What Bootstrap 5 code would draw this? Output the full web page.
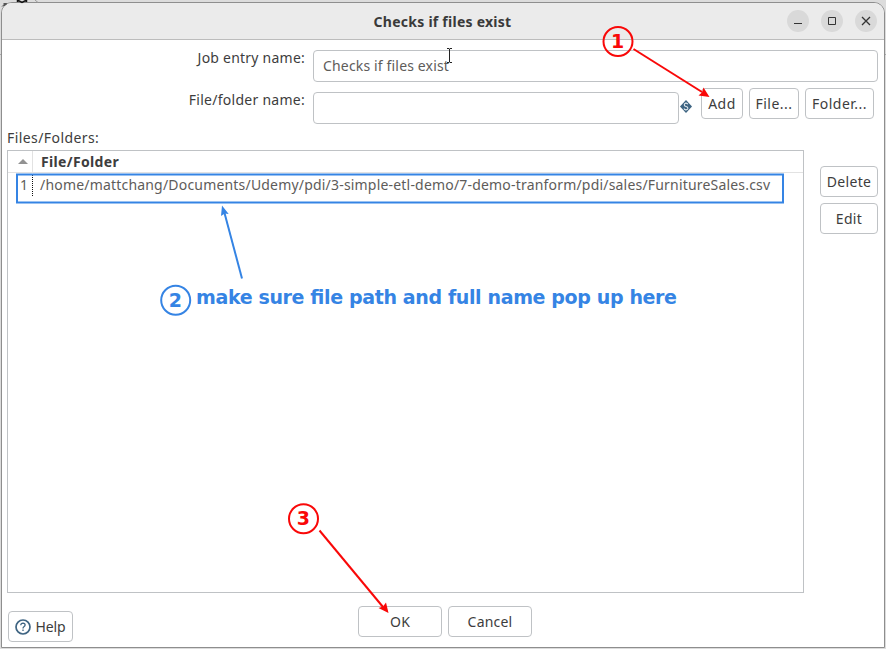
<!DOCTYPE html>
<html lang="en">
<head>
<meta charset="utf-8">
<meta name="viewport" content="width=device-width, initial-scale=1">
<title>Checks if files exist</title>
<link href="https://cdn.jsdelivr.net/npm/bootstrap@5.3.0/dist/css/bootstrap.min.css" rel="stylesheet">
<style>
body{width:886px;height:649px;background:#dcdcdc;font-family:"Noto Sans","Open Sans",sans-serif;font-size:14px;line-height:20px;color:#3d3d3d;padding:2px 1px 1px 1px}
.dialog{height:646px;background:#fff;border:1px solid #8e8e8e;border-radius:11px 11px 0 0}
.titlebar{height:37px;background:#ebebeb;border-bottom:1px solid #bcbcbc;border-radius:10px 10px 0 0;padding:0 7px 0 0}
.title-side{width:96px}
.title-text{font-weight:700;letter-spacing:.25px;color:#3a3a3a;padding-top:2px}
.win-buttons{gap:12px}
.win-btn{width:22px;height:22px;border-radius:50%;background:#d9d9d9}
.lbl{width:303px;letter-spacing:.23px}
.name-row .lbl{margin-top:-2px}
.field{height:32px;border:1px solid #bfc2c5;border-radius:4px;margin-left:8px;padding:5px 9px;color:#5e5c5a;background:#fff;letter-spacing:.16px}
.name-field{width:565px}
.path-field{width:366px}
.name-row{margin-top:10px}
.path-row{margin-top:6px;height:36px}
.path-row .lbl{padding-top:2px;letter-spacing:.27px}
.path-row .path-field{margin-top:4px}
.tool{height:31px;border:1px solid #bfc2c5;border-radius:4px;background:#fff;color:#3d3d3d;font-size:14px;line-height:20px;padding:0;letter-spacing:.2px}
.w-add{width:42px;letter-spacing:.5px}.w-file{width:50px;margin:0 6px;letter-spacing:.45px}.w-folder{width:69px;letter-spacing:.5px}.w-side{width:58px;letter-spacing:.35px}.w-main{width:84px}.w-help{width:65px;letter-spacing:-.1px}
.w-help svg{margin-right:4px}
.var-icon{width:22px;padding:12px 0 0 1px}
.list-label{margin:4px 0 2px 5px;letter-spacing:.42px}
.list-area{margin-left:5px}
.grid-box{width:797px;height:443px;border:1px solid #bfc2c5}
.grid-head{height:22px;border-bottom:1px solid #e2e2e2}
.grid-head .num{width:25px;border-right:1px solid #e2e2e2;padding-left:5px;padding-bottom:1px}
.grid-head .name{padding:1px 0 0 8px;font-weight:700;letter-spacing:.35px}
.grid-line{height:24px;padding-top:2px;color:#5e5c5a}
.grid-line .num{width:26px;padding-left:12px}
.grid-line .path{padding-left:6px;letter-spacing:.19px}
.side-tools{margin:16px 0 0 16px;gap:6px}
.foot{height:55px;padding:13px 0 0 6px}
.foot .w-help{margin-top:5px;margin-right:285px}
.foot .w-main{margin-right:6px}
.notes{left:0;top:0;pointer-events:none;font-family:"DejaVu Sans",sans-serif;font-weight:700}
</style>
</head>
<body class="position-relative overflow-hidden">
<main class="dialog">
  <header class="titlebar d-flex align-items-center justify-content-between">
    <div class="title-side"></div>
    <div class="title-text">Checks if files exist</div>
    <div class="win-buttons d-flex align-items-center">
      <span class="win-btn d-flex"><svg width="22" height="22"><path d="M7 13.500h8" stroke="#333" fill="none"/></svg></span>
      <span class="win-btn d-flex"><svg width="22" height="22"><path d="M7.500 7.500h7v7h-7z" stroke="#333" fill="none"/></svg></span>
      <span class="win-btn d-flex"><svg width="22" height="22"><path d="M7 7l8 8M15 7l-8 8" stroke="#333" stroke-width="1.300" fill="none"/></svg></span>
    </div>
  </header>
  <div class="name-row d-flex">
    <div class="lbl text-end">Job entry name:</div>
    <div class="field name-field">Checks if files exist</div>
  </div>
  <div class="path-row d-flex">
    <div class="lbl text-end">File/folder name:</div>
    <div class="field path-field"></div>
    <div class="var-icon"><svg class="d-block" width="12" height="13" viewBox="0 0 13 13" preserveAspectRatio="none"><path d="M6.500 0L13 6.500L6.500 13L0 6.500z" fill="#3e6482"/><path d="M8.500 4.300Q8 3.300 6.500 3.300Q4.600 3.300 4.600 4.800Q4.600 6.200 6.500 6.500Q8.600 6.800 8.600 8.200Q8.600 9.700 6.500 9.700Q4.800 9.700 4.300 8.500M6.500 2.300v1M6.500 9.700v1" stroke="#e8eef2" stroke-width="1.100" fill="none"/></svg></div>
    <button class="btn tool w-add">Add</button>
    <button class="btn tool w-file">File...</button>
    <button class="btn tool w-folder">Folder...</button>
  </div>
  <div class="list-label">Files/Folders:</div>
  <div class="list-area d-flex">
    <div class="grid-box">
      <div class="grid-head d-flex">
        <div class="num d-flex align-items-center justify-content-center"><svg width="10" height="5"><path d="M0 5L5 0L10 5z" fill="#929292"/></svg></div>
        <div class="name">File/Folder</div>
      </div>
      <div class="grid-line d-flex text-nowrap">
        <div class="num">1</div>
        <div class="path">/home/mattchang/Documents/Udemy/pdi/3-simple-etl-demo/7-demo-tranform/pdi/sales/FurnitureSales.csv</div>
      </div>
    </div>
    <div class="side-tools d-flex flex-column">
      <button class="btn tool w-side">Delete</button>
      <button class="btn tool w-side">Edit</button>
    </div>
  </div>
  <footer class="foot d-flex align-items-start">
    <button class="btn tool w-help d-flex align-items-center justify-content-center"><svg width="16" height="16"><circle cx="8" cy="8" r="7" stroke="#3e6482" stroke-width="1.700" fill="none"/><path d="M5.800 6.200Q5.900 4.200 8 4.200Q10.100 4.300 10.100 6Q10.100 7 8.900 7.700Q8 8.300 8 9.400M8 10.500v1.500" stroke="#3e6482" stroke-width="1.300" fill="none"/></svg>Help</button>
    <button class="btn tool w-main">OK</button>
    <button class="btn tool w-main">Cancel</button>
  </footer>
</main>
<svg class="notes position-absolute" width="886" height="649" viewBox="0 0 886 649" fill="none">
  <path d="M1 6.500L7 3L5 6zM3.500 3h3v2h-3z" fill="#555"/>
  <path d="M17.500 0v2M26.500 0v2M17.500 0l4.500 2.500L26.500 0" stroke="#111" stroke-width="1.500"/>
  <path d="M35 0l3 2.500" stroke="#999"/>
  <path d="M0 54.500h1M885 54.500h1" stroke="#aaa"/>
  <path d="M32.500 175v21" stroke="#111" stroke-dasharray="1 1"/>
  <path d="M447 48.500h2l.500 1 .500-1h2M449.500 49v13M447 62.500h2l.500-1 .500 1h2" stroke="#222"/>
  <rect x="17" y="174.500" width="766" height="28" stroke="#3584e4" stroke-width="2"/>
  <g stroke="#3584e4" stroke-width="2"><circle cx="175.700" cy="300.300" r="14.500"/><path d="M242 278.500L224.500 213"/></g>
  <path d="M222 205.500L228.700 214L224.800 213.500L221 216z" fill="#3584e4"/>
  <g stroke="#f90808" stroke-width="2"><circle cx="618" cy="41.500" r="14.500"/><path d="M633.500 49L702 92"/><circle cx="303.500" cy="518.800" r="14.500"/><path d="M319.500 530.500L383 607"/></g>
  <path d="M709.500 97L698.500 95.500L702 92.500L703.500 87.500z" fill="#f90808"/>
  <path d="M388.500 613L378.500 608L383 606.500L386 602.500z" fill="#f90808"/>
  <g font-size="19" text-anchor="middle"><text x="617.500" y="48" fill="#f90808">1</text><text x="175.300" y="307" fill="#3584e4">2</text><text x="303.300" y="525" fill="#f90808">3</text></g>
  <text x="196" y="304" font-size="19" textLength="481" fill="#3584e4">make sure file path and full name pop up here</text>
</svg>
<script src="https://cdn.jsdelivr.net/npm/bootstrap@5.3.0/dist/js/bootstrap.bundle.min.js"></script>
</body>
</html>
